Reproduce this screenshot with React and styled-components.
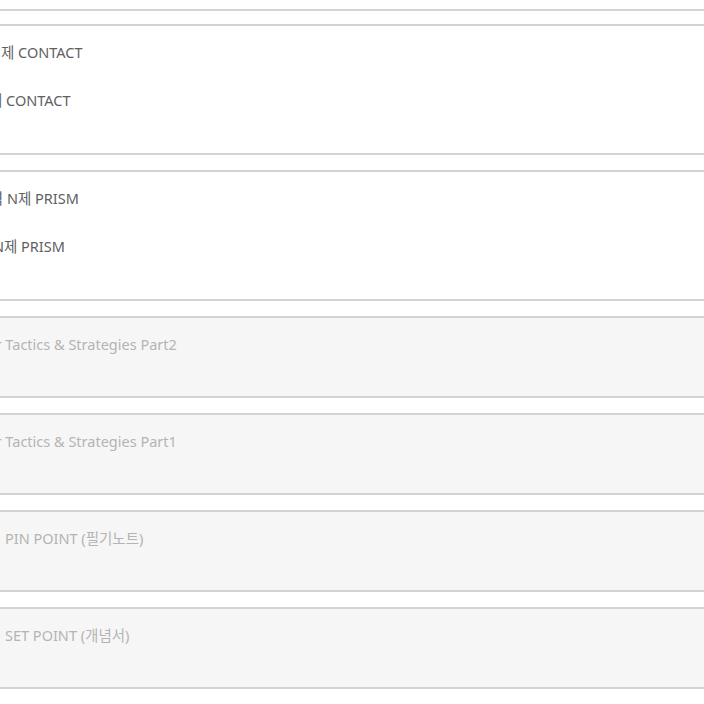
import React from 'react';
import styled, { createGlobalStyle } from 'styled-components';

const GlobalStyle = createGlobalStyle`
    html, body {
        margin: 0;
        padding: 0;
        background: #ffffff;
        overflow: hidden;
    }

    body {
        font-family: "Noto Sans", "Noto Sans CJK KR", sans-serif;
    }
`;

const BookList = styled.div`
    display: flex;
    flex-direction: column;
    gap: 15px;
    margin: -120px -12px 0;

    /* the card above the visible list sits a bit closer */
    & > :first-child {
        margin-bottom: -2px;
    }
`;

const BookCard = styled.div`
    box-sizing: border-box;
    height: ${props => props.$tall ? '131px' : '82px'};
    padding-top: 16px;
    background: ${props => props.$soldOut ? '#f6f6f6' : '#ffffff'};
    border: 2px solid #d3d3d3;
    overflow: hidden;
    display: flex;
    flex-direction: column;
    gap: 28px;
`;

const Title = styled.div`
    font-size: 14.5px;
    line-height: 20px;
    white-space: nowrap;
    color: ${props => props.$soldOut ? '#b4b4b4' : '#5f5f5f'};
    margin-left: ${props => props.$shift}px;
`;

const books = [
    { titles: [], tall: true },
    {
        tall: true,
        titles: [
            { text: '수학 실전 N제 CONTACT', shift: -61 },
            { text: '수학 기본 N제 CONTACT', shift: -73 },
        ],
    },
    {
        tall: true,
        titles: [
            { text: '수학 실력 N제 PRISM', shift: -44 },
            { text: '수학 기본 N제 PRISM', shift: -58 },
        ],
    },
    { soldOut: true, titles: [{ text: 'Winter Tactics & Strategies Part2', shift: -34 }] },
    { soldOut: true, titles: [{ text: 'Winter Tactics & Strategies Part1', shift: -34 }] },
    { soldOut: true, titles: [{ text: 'PIN POINT (필기노트)', shift: 15 }] },
    { soldOut: true, titles: [{ text: 'SET POINT (개념서)', shift: 15 }] },
];

const App = () => {
    return (
        <>
            <GlobalStyle />
            <BookList>
                {books.map((b, i) => (
                    <BookCard key={i} $tall={b.tall} $soldOut={b.soldOut}>
                        {b.titles.map((t, j) => (
                            <Title key={j} $shift={t.shift} $soldOut={b.soldOut}>{t.text}</Title>
                        ))}
                    </BookCard>
                ))}
            </BookList>
        </>
    );
}

export default App;
